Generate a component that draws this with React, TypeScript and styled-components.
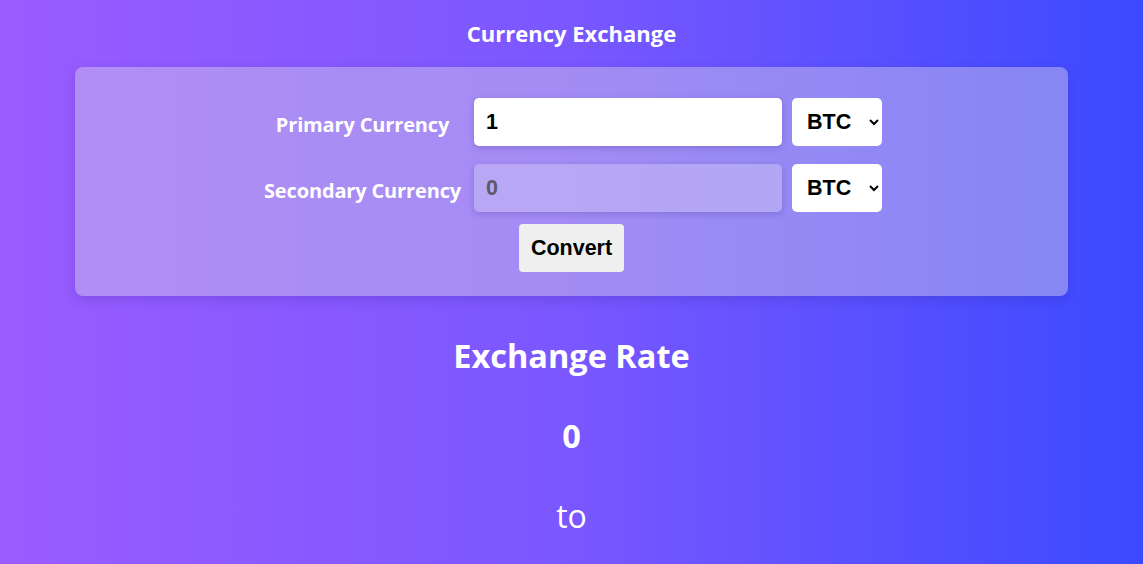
import React, { useState } from 'react'
import styled, { createGlobalStyle } from 'styled-components'

const GlobalStyle = createGlobalStyle`
    html, body {
        margin: 0;
        padding: 0;
    }
    body {
        min-height: 100vh;
        background: linear-gradient(to right, #9a5cff 0%, #7a57ff 50%, #3b4aff 100%);
        font-family: "Open Sans", "Noto Sans", sans-serif;
        color: white;
    }
`

const currencies = ['BTC', 'ETH', 'USD', 'EUR', 'GBP']

export default function App() {
    const [amount, setAmount] = useState('1')
    const [primary, setPrimary] = useState('BTC')
    const [secondary, setSecondary] = useState('BTC')

    return (
        <Page>
            <GlobalStyle />
            <Title>Currency Exchange</Title>
            <Card>
                <Form>
                    <Label>Primary Currency</Label>
                    <AmountInput
                        type="number"
                        value={amount}
                        onChange={(e) => setAmount(e.target.value)}
                    />
                    <CurrencySelect value={primary} onChange={(e) => setPrimary(e.target.value)}>
                        {currencies.map((c) => (
                            <option key={c}>{c}</option>
                        ))}
                    </CurrencySelect>

                    <Label>Secondary Currency</Label>
                    <AmountInput type="number" value="0" disabled />
                    <CurrencySelect value={secondary} onChange={(e) => setSecondary(e.target.value)}>
                        {currencies.map((c) => (
                            <option key={c}>{c}</option>
                        ))}
                    </CurrencySelect>
                </Form>
                <ConvertButton>Convert</ConvertButton>
            </Card>
            <Result>
                <Heading>Exchange Rate</Heading>
                <Rate>0</Rate>
                <Pair>to</Pair>
            </Result>
        </Page>
    )
}

const Page = styled.div`
    display: flex;
    flex-direction: column;
    align-items: center;
    padding-top: 19px;
`

const Title = styled.h1`
    margin: 0;
    font-size: 22px;
    line-height: 29px;
    font-weight: 700;
`

const Card = styled.div`
    box-sizing: border-box;
    width: 993px;
    margin-top: 19px;
    padding: 31px 0 24px;
    border-radius: 8px;
    background: rgba(208, 200, 232, 0.47);
    box-shadow: 0 4px 12px rgba(40, 20, 120, 0.18);
    display: flex;
    flex-direction: column;
    align-items: center;
`

const Form = styled.div`
    display: grid;
    grid-template-columns: 203px 308px 90px;
    grid-auto-rows: 48px;
    column-gap: 10px;
    row-gap: 18px;
    align-items: center;
`

const Label = styled.label`
    justify-self: center;
    padding-top: 4px;
    white-space: nowrap;
    font-size: 20px;
    letter-spacing: -0.15px;
    font-weight: 700;
    color: white;
`

const AmountInput = styled.input`
    box-sizing: border-box;
    height: 48px;
    width: 100%;
    padding: 0 12px;
    border: none;
    border-radius: 5px;
    background: white;
    box-shadow: 0 2px 6px rgba(40, 20, 120, 0.2);
    font-family: "Liberation Sans", Arial, sans-serif;
    font-size: 21.5px;
    font-weight: 700;
    color: black;
    outline: none;
    -moz-appearance: textfield;

    &::-webkit-outer-spin-button,
    &::-webkit-inner-spin-button {
        -webkit-appearance: none;
        margin: 0;
    }

    &:disabled {
        background: rgba(200, 190, 245, 0.55);
        color: #5a5a6a;
    }
`

const CurrencySelect = styled.select`
    box-sizing: border-box;
    height: 48px;
    width: 90px;
    padding: 0 6px 0 11px;
    border: none;
    border-radius: 5px;
    background: white;
    font-family: "Liberation Sans", Arial, sans-serif;
    font-size: 21.5px;
    font-weight: 700;
    color: black;
    outline: none;
`

const ConvertButton = styled.button`
    margin-top: 12px;
    width: 105px;
    height: 48px;
    border: none;
    border-radius: 4px;
    background: #efefef;
    font-family: "Liberation Sans", Arial, sans-serif;
    font-size: 21.5px;
    font-weight: 700;
    color: black;
    cursor: pointer;
`

const Result = styled.div`
    margin-top: 40px;
    display: flex;
    flex-direction: column;
    align-items: center;
    gap: 40px;
`

const Heading = styled.h2`
    margin: 0;
    font-size: 32.5px;
    line-height: 40px;
    font-weight: 700;
`

const Rate = styled(Heading)``

const Pair = styled.p`
    margin: 0;
    font-size: 32px;
    line-height: 40px;
    font-weight: 400;
`
